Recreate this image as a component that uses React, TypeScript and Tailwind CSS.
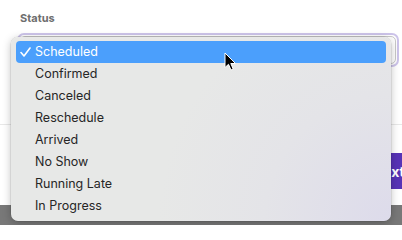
import React from "react";

const items = [
  "Scheduled",
  "Confirmed",
  "Canceled",
  "Reschedule",
  "Arrived",
  "No Show",
  "Running Late",
  "In Progress",
];

export default function App() {
  return (
    <div
      className="relative w-[402px] h-[225px] overflow-hidden bg-white flex flex-col"
      style={{ fontFamily: "Inter, 'Noto Sans', sans-serif" }}
    >
      <div className="pt-[12px] pl-[20px] text-[11px] leading-[13px] font-bold text-[#6e6e6e]">
        Status
      </div>
      <div className="mt-[8px] ml-[17px] mr-[3px] h-[34px] rounded-[7px] border-[2px] border-[#cdc4ea] bg-white p-[1px]">
        <div className="h-full w-full rounded-[5px] border border-[#c9c9c9] bg-white" />
      </div>
      <div className="mt-[57px] border-t border-[#e8e8e8]" />
      <div className="mt-[28px] flex justify-end mr-[-20px]">
        <div className="w-[67px] h-[36px] rounded-[6px] bg-[#5733b6] text-white font-bold text-[14px] flex items-center justify-center">
          Next
        </div>
      </div>
      <div className="mt-auto h-[20px] bg-[#787878]" />

      <div className="absolute left-[11px] top-[37px] w-[380px] h-[184px] rounded-[7px] bg-[radial-gradient(circle_at_100%_100%,#dddbeb_0%,#e4e4e8_30%,#e7e8e7_55%)] shadow-[0_2px_8px_rgba(0,0,0,0.25),0_0_0_0.5px_rgba(0,0,0,0.12)] pt-[4px] px-[5px]">
        {items.map((it, i) => (
          <div
            key={it}
            className={
              i === 0
                ? "relative h-[22px] rounded-[4px] bg-[#4b9ffc] text-white flex items-center pl-[19px] text-[12.5px]"
                : "relative h-[22px] text-[#262626] flex items-center pl-[19px] text-[12.5px]"
            }
          >
            {i === 0 && (
              <svg
                className="absolute left-[4px] top-[6px]"
                width="11"
                height="10"
                viewBox="0 0 11 10"
                fill="none"
              >
                <path
                  d="M1 5.5 L4 9 L10 1"
                  stroke="white"
                  strokeWidth="1.6"
                  strokeLinecap="round"
                  strokeLinejoin="round"
                />
              </svg>
            )}
            {it}
          </div>
        ))}
      </div>

      <svg
        className="absolute left-[224px] top-[52px]"
        width="13"
        height="19"
        viewBox="0 0 13 19"
      >
        <path
          d="M1 1 L1 15.5 L4.5 12.3 L7 18 L9.2 17 L6.8 11.5 L11.5 11.5 Z"
          fill="black"
          stroke="white"
          strokeWidth="1"
          strokeLinejoin="round"
        />
      </svg>
    </div>
  );
}
